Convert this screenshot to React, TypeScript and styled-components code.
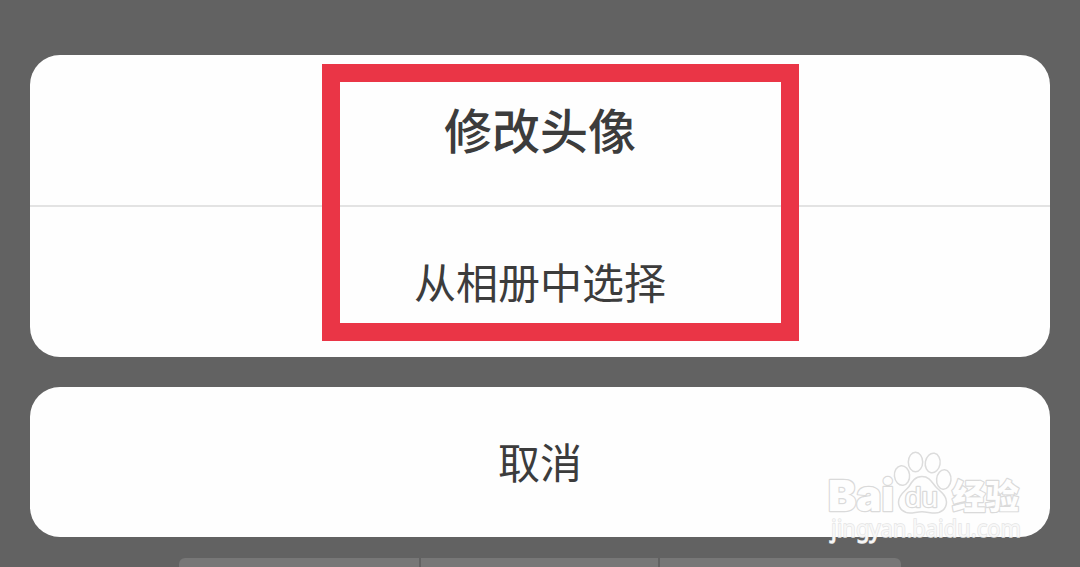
import styled, { createGlobalStyle } from "styled-components";

const GlobalStyle = createGlobalStyle`
  body {
    margin: 0;
    background: #626262;
    font-family: "Noto Sans CJK SC", sans-serif;
    color: #3c3c3c;
    overflow: hidden;
  }
`;

const Screen = styled.div`
  position: relative;
  box-sizing: border-box;
  height: 567px;
  padding: 55px 30px 0;
  display: flex;
  flex-direction: column;
  gap: 30px;
  overflow: hidden;
`;

const Sheet = styled.div`
  flex: none;
  border-radius: 30px;
  background: #fefefe;
  overflow: hidden;
`;

const Row = styled.div<{ $divided?: boolean }>`
  box-sizing: border-box;
  height: ${(p) => (p.$divided ? 152 : 150)}px;
  padding-bottom: ${(p) => (p.$divided ? 4 : 2)}px;
  border-bottom: ${(p) => (p.$divided ? "2px solid #e3e3e3" : "none")};
  display: flex;
  align-items: center;
  justify-content: center;
`;

const Title = styled.h1`
  margin: 0;
  font-size: 48px;
  line-height: 56px;
  font-weight: 500;
`;

const Label = styled.span`
  font-size: 42px;
  line-height: 50px;
`;

const Highlight = styled.div`
  position: absolute;
  left: 322px;
  top: 64px;
  box-sizing: border-box;
  width: 477px;
  height: 277px;
  border: 18px solid #ea3546;
`;

const Dock = styled.div`
  flex: none;
  width: 722px;
  height: 30px;
  margin: -9px auto 0;
  border-radius: 6px;
  background: #777;
  display: grid;
  grid-template-columns: 242px 239px 1fr;
`;

const DockCell = styled.div`
  border-right: 2px solid #626262;

  &:last-child {
    border-right: none;
  }
`;

const Watermark = styled.svg`
  position: absolute;
  left: 820px;
  top: 445px;
`;

function BaiduWatermark() {
  return (
    <Watermark width="210" height="105" viewBox="820 445 210 105">
      <g fill="#fefefe" stroke="#dcdcdc" strokeWidth="1.5">
        <ellipse cx="902" cy="475.500" rx="7.600" ry="9.800" transform="rotate(-6 902 475.500)" />
        <ellipse cx="915.500" cy="462" rx="7.200" ry="9.800" />
        <ellipse cx="932.700" cy="463" rx="7.400" ry="9.800" transform="rotate(10 932.700 463)" />
        <ellipse cx="943.800" cy="479.500" rx="7.200" ry="9.800" transform="rotate(5 943.800 479.500)" />
        <path d="M922 476.500c-7 0-10 5-13 10-4 5-10.500 8-10.500 15.500 0 7 5.500 11 11.500 11 4 0 7-1.200 12-1.200s8 1.200 13 1.200c6 0 11.500-4 11.500-11 0-7.500-7-11-11-15.500-4-5-6.500-10-13.500-10z" />
      </g>
      <g fill="#fefefe" stroke="#dadada" strokeWidth="2.4" strokeLinejoin="round" paintOrder="stroke">
        <text x="828" y="511" fontFamily="Inter, sans-serif" fontWeight="900" fontSize="43" textLength="66" lengthAdjust="spacingAndGlyphs">
          Bai
        </text>
        <text x="905" y="507" fontFamily="Liberation Sans, sans-serif" fontSize="27" textLength="33" lengthAdjust="spacingAndGlyphs">
          du
        </text>
        <text x="952" y="509" fontFamily="Noto Sans CJK SC, sans-serif" fontWeight="900" fontSize="34" textLength="67" lengthAdjust="spacingAndGlyphs">
          经验
        </text>
      </g>
      <text
        x="831"
        y="537"
        fontFamily="Noto Sans, sans-serif"
        fontSize="24"
        fill="#f8f8f8"
        stroke="#e4e4e4"
        strokeWidth="1.4"
        paintOrder="stroke"
        textLength="190"
        lengthAdjust="spacingAndGlyphs"
      >
        jingyan.baidu.com
      </text>
    </Watermark>
  );
}

export default function App() {
  return (
    <>
      <GlobalStyle />
      <Screen>
        <Sheet>
          <Row $divided>
            <Title>修改头像</Title>
          </Row>
          <Row>
            <Label>从相册中选择</Label>
          </Row>
        </Sheet>
        <Sheet>
          <Row>
            <Label>取消</Label>
          </Row>
        </Sheet>
        <Dock>
          <DockCell />
          <DockCell />
          <DockCell />
        </Dock>
        <Highlight />
        <BaiduWatermark />
      </Screen>
    </>
  );
}
